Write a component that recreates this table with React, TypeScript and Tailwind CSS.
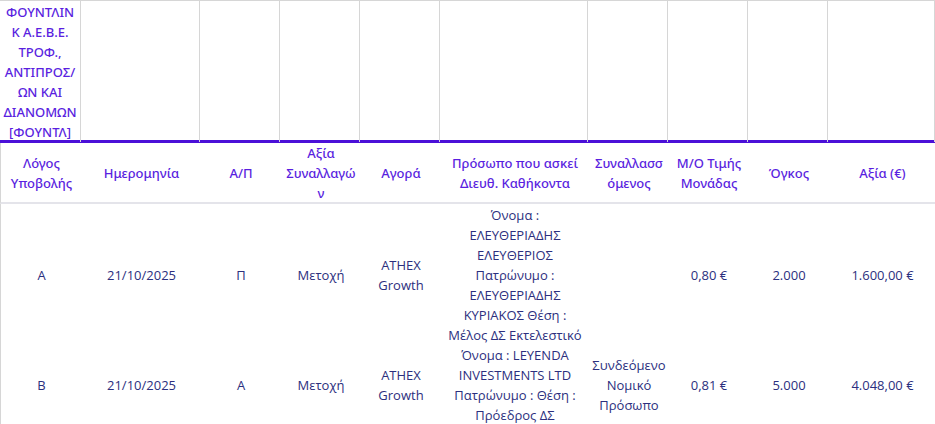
import React from "react";

const cols = "grid grid-cols-[81px_119px_80px_80px_80px_148px_80px_80px_80px_107px]";

const company = ["ΦΟΥΝΤΛΙΝ", "Κ Α.Ε.Β.Ε.", "ΤΡΟΦ.,", "ΑΝΤΙΠΡΟΣ/", "ΩΝ ΚΑΙ", "ΔΙΑΝΟΜΩΝ", "[ΦΟΥΝΤΛ]"];

const headers: string[][] = [
  ["Λόγος", "Υποβολής"],
  ["Ημερομηνία"],
  ["Α/Π"],
  ["Αξία", "Συναλλαγώ", "ν"],
  ["Αγορά"],
  ["Πρόσωπο που ασκεί", "Διευθ. Καθήκοντα"],
  ["Συναλλασσ", "όμενος"],
  ["Μ/Ο Τιμής", "Μονάδας"],
  ["Όγκος"],
  ["Αξία (€)"],
];

const rows: { h: string; cells: string[][] }[] = [
  {
    h: "h-[141px] pt-px",
    cells: [
      ["Α"],
      ["21/10/2025"],
      ["Π"],
      ["Μετοχή"],
      ["ATHEX", "Growth"],
      [
        "Όνομα :",
        "ΕΛΕΥΘΕΡΙΑΔΗΣ",
        "ΕΛΕΥΘΕΡΙΟΣ",
        "Πατρώνυμο :",
        "ΕΛΕΥΘΕΡΙΑΔΗΣ",
        "ΚΥΡΙΑΚΟΣ Θέση :",
        "Μέλος ΔΣ Εκτελεστικό",
      ],
      [],
      ["0,80 €"],
      ["2.000"],
      ["1.600,00 €"],
    ],
  },
  {
    h: "h-[80px]",
    cells: [
      ["Β"],
      ["21/10/2025"],
      ["Α"],
      ["Μετοχή"],
      ["ATHEX", "Growth"],
      ["Όνομα : LEYENDA", "INVESTMENTS LTD", "Πατρώνυμο : Θέση :", "Πρόεδρος ΔΣ"],
      ["Συνδεόμενο", "Νομικό", "Πρόσωπο"],
      ["0,81 €"],
      ["5.000"],
      ["4.048,00 €"],
    ],
  },
];

function Lines({ lines }: { lines: string[] }) {
  return (
    <>
      {lines.map((l, i) => (
        <span key={i} className="block whitespace-nowrap">
          {l}
        </span>
      ))}
    </>
  );
}

export default function App() {
  return (
    <div className="w-[935px] h-[424px] overflow-hidden bg-white text-[13px] leading-5">
      {/* company row */}
      <div className={`${cols} h-[140px] border-t border-[#d6d6d6] font-['Noto_Sans',sans-serif] font-medium text-[#5a1fe0]`}>
        <div className="border-r border-[#d6d6d6] text-center pt-px">
          <Lines lines={company} />
        </div>
        {Array.from({ length: 9 }).map((_, i) => (
          <div key={i} className="border-r border-[#d6d6d6]" />
        ))}
      </div>
      <div className="h-[3px] bg-[#4b10d8]" />

      {/* header row */}
      <div
        className={`${cols} h-[61px] border-l border-[#d6d6d6] border-b-2 border-b-[#e4e4ea] font-['Noto_Sans',sans-serif] font-medium text-[#5a1fe0]`}
      >
        {headers.map((h, i) => (
          <div key={i} className="flex flex-col items-center justify-center text-center">
            <Lines lines={h} />
          </div>
        ))}
      </div>

      {/* data rows */}
      <div className="border-l border-[#d6d6d6] font-['Open_Sans',sans-serif] text-[#2c2f7e]">
        {rows.map((r, ri) => (
          <div key={ri} className={`${cols} ${r.h}`}>
            {r.cells.map((c, ci) => (
              <div key={ci} className="flex flex-col items-center justify-center text-center">
                <Lines lines={c} />
              </div>
            ))}
          </div>
        ))}
      </div>
    </div>
  );
}
